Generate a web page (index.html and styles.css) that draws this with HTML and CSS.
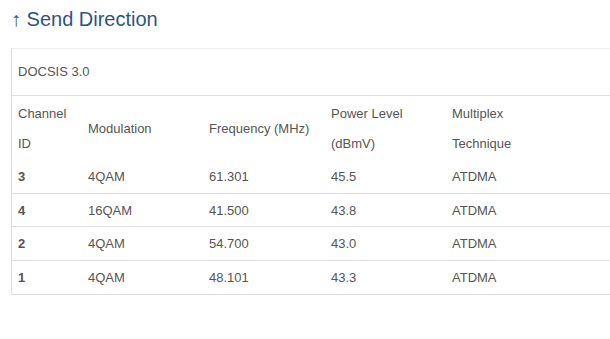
FILE: index.html
```html
<!DOCTYPE html>
<html>
<head>
<meta charset="utf-8">
<link rel="stylesheet" href="styles.css">
</head>
<body>
<div class="page">
  <h2 class="title">↑ Send Direction</h2>
  <div class="panel">
    <div class="panel-head">DOCSIS 3.0</div>
    <table class="grid">
      <colgroup>
        <col class="c1"><col class="c2"><col class="c3"><col class="c4"><col class="c5">
      </colgroup>
      <thead>
        <tr>
          <th>Channel<br>ID</th>
          <th>Modulation</th>
          <th>Frequency (MHz)</th>
          <th>Power Level<br>(dBmV)</th>
          <th>Multiplex<br>Technique</th>
        </tr>
      </thead>
      <tbody>
        <tr><td class="id">3</td><td>4QAM</td><td>61.301</td><td>45.5</td><td>ATDMA</td></tr>
        <tr><td class="id">4</td><td>16QAM</td><td>41.500</td><td>43.8</td><td>ATDMA</td></tr>
        <tr><td class="id">2</td><td>4QAM</td><td>54.700</td><td>43.0</td><td>ATDMA</td></tr>
        <tr><td class="id">1</td><td>4QAM</td><td>48.101</td><td>43.3</td><td>ATDMA</td></tr>
      </tbody>
    </table>
  </div>
</div>
</body>
</html>
```
FILE: styles.css
```css
html, body {
  margin: 0;
  padding: 0;
  overflow: hidden;
  background: #fff;
}
body {
  font-family: "Liberation Sans", Arial, sans-serif;
  color: #555;
  font-size: 13px;
}
.page {
  padding: 6px 0 0 11px;
}
.title {
  margin: 0 0 16px 0;
  font-size: 20px;
  line-height: 26px;
  font-weight: normal;
  color: #2d5486;
}
.panel {
  width: 620px;
  border-left: 1px solid #dcdcdc;
  border-top: 1px solid #eeeeee;
}
.panel-head {
  height: 46px;
  line-height: 46px;
  padding-left: 6px;
  border-bottom: 1px solid #dddddd;
}
.grid {
  width: 100%;
  border-collapse: collapse;
  table-layout: fixed;
}
.c1 { width: 70px; }
.c2 { width: 121px; }
.c3 { width: 122px; }
.c4 { width: 121px; }
.grid th {
  font-weight: normal;
  text-align: left;
  vertical-align: middle;
  padding: 3px 6px 1px;
  line-height: 30px;
}
.grid td {
  padding: 9px 6px 7px;
  line-height: 16.67px;
  border-bottom: 1px solid #dddddd;
}
.grid td.id {
  font-weight: bold;
}
```
